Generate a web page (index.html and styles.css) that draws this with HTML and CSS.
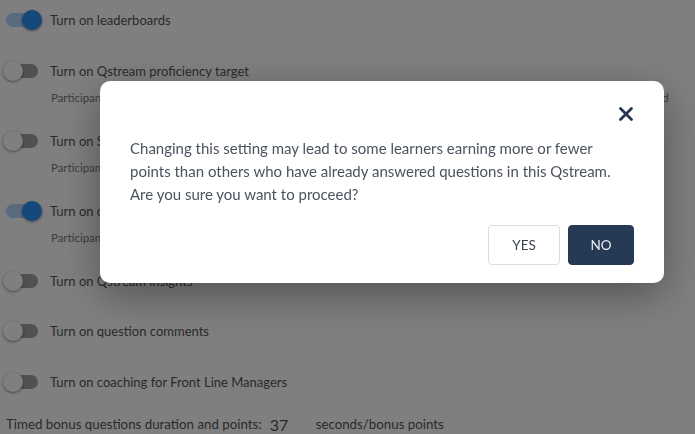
FILE: index.html
```html
<!DOCTYPE html>
<html lang="en">
<head>
<meta charset="utf-8">
<title>Settings</title>
<link rel="stylesheet" href="styles.css">
</head>
<body>
<main class="page">
  <ul class="settings">
    <li class="setting">
      <div class="setting-line"><span class="switch is-on"><span class="knob"></span></span><span class="label">Turn on leaderboards</span></div>
    </li>
    <li class="setting">
      <div class="setting-line"><span class="switch"><span class="knob"></span></span><span class="label">Turn on Qstream proficiency target</span></div>
      <p class="hint">Participants who reach the proficiency target for each topic in this Qstream will be shown as proficient and their score noted</p>
    </li>
    <li class="setting">
      <div class="setting-line"><span class="switch"><span class="knob"></span></span><span class="label">Turn on Spaced Education</span></div>
      <p class="hint">Participants receive questions again until they are answered correctly</p>
    </li>
    <li class="setting">
      <div class="setting-line"><span class="switch is-on"><span class="knob"></span></span><span class="label">Turn on confidence scoring</span></div>
      <p class="hint">Participants rate their confidence before answering</p>
    </li>
    <li class="setting">
      <div class="setting-line"><span class="switch"><span class="knob"></span></span><span class="label">Turn on Qstream insights</span></div>
    </li>
    <li class="setting">
      <div class="setting-line"><span class="switch"><span class="knob"></span></span><span class="label">Turn on question comments</span></div>
    </li>
    <li class="setting">
      <div class="setting-line"><span class="switch"><span class="knob"></span></span><span class="label">Turn on coaching for Front Line Managers</span></div>
    </li>
  </ul>
  <div class="bonus">
    <span class="bonus-label">Timed bonus questions duration and points:</span>
    <span class="bonus-value">37</span>
    <span class="bonus-unit">seconds/bonus points</span>
  </div>
</main>

<div class="backdrop">
  <div class="dialog" role="dialog" aria-modal="true">
    <div class="dialog-head">
      <button class="close" aria-label="Close">
        <svg width="18" height="18" viewBox="0 0 18 18" aria-hidden="true"><path d="M3.5 3.5 L14.5 14.5 M14.5 3.5 L3.5 14.5" stroke="#25354f" stroke-width="2.8" stroke-linecap="round" fill="none"/></svg>
      </button>
    </div>
    <p class="dialog-text">Changing this setting may lead to some learners earning more or fewer points than others who have already answered questions in this Qstream. Are you sure you want to proceed?</p>
    <div class="dialog-actions">
      <button class="btn btn-yes">YES</button>
      <button class="btn btn-no">NO</button>
    </div>
  </div>
</div>
</body>
</html>
```

FILE: styles.css
```css
* { box-sizing: border-box; }

html, body {
  margin: 0;
  padding: 0;
  background: #ffffff;
  width: 695px;
  height: 434px;
  overflow: hidden;
}

body {
  font-family: "Lato", "Open Sans", "Liberation Sans", sans-serif;
  color: #555555;
}

.page {
  padding: 5px 0 0 3px;
}

.settings {
  list-style: none;
  margin: 0;
  padding: 0;
  display: flex;
  flex-direction: column;
  gap: 20px;
}

.setting-line {
  display: flex;
  align-items: center;
  height: 30.5px;
}

.switch {
  position: relative;
  width: 40px;
  height: 20px;
  flex: 0 0 40px;
}

.switch::before {
  content: "";
  position: absolute;
  left: 3px;
  top: 3px;
  width: 32px;
  height: 14px;
  border-radius: 7px;
  background: #a2a2a2;
}

.knob {
  position: absolute;
  left: 0;
  top: 0;
  width: 20px;
  height: 20px;
  border-radius: 50%;
  background: #ffffff;
  box-shadow: 0 1px 3px rgba(0, 0, 0, 0.45);
}

.switch.is-on::before { background: #b0d6ff; }
.switch.is-on .knob { left: 19px; background: #2a92f6; }

.label {
  margin-left: 7px;
  font-size: 13px;
  white-space: nowrap;
}

.hint {
  margin: 2.5px 0 0 48px;
  line-height: 17px;
  height: 17px;
  font-size: 11.4px;
  color: #7a7a7a;
  white-space: nowrap;
}

.bonus {
  margin-top: 17px;
  margin-left: 3px;
  display: flex;
  align-items: center;
  height: 20px;
  font-size: 13.3px;
  white-space: nowrap;
}

.bonus-value {
  font-size: 16px;
  margin-left: 8px;
  width: 46px;
}

.backdrop {
  position: fixed;
  inset: 0;
  background: rgba(0, 0, 0, 0.5);
}

.dialog {
  position: absolute;
  left: 100px;
  top: 81px;
  width: 564px;
  height: 202px;
  background: #ffffff;
  border-radius: 10px;
  padding: 24px 30px 18px 30px;
  box-shadow: 0 12px 40px rgba(0, 0, 0, 0.35);
}

.dialog-head {
  display: flex;
  justify-content: flex-end;
  height: 18px;
  margin-right: -1px;
}

.close {
  border: 0;
  background: none;
  padding: 0;
  width: 18px;
  height: 18px;
  cursor: pointer;
}

.close svg { display: block; }

.dialog-text {
  margin: 14px 0 0 0;
  font-size: 15px;
  line-height: 23px;
  color: #4b5360;
}

.dialog-actions {
  margin-top: 19px;
  display: flex;
  justify-content: flex-end;
  gap: 8px;
}

.btn {
  height: 40px;
  border-radius: 4px;
  font-family: inherit;
  font-size: 13.5px;
  cursor: pointer;
}

.btn-yes {
  width: 72px;
  background: #ffffff;
  border: 1px solid #dcdcdc;
  color: #3b4350;
}

.btn-no {
  width: 66px;
  background: #263a55;
  border: 1px solid #263a55;
  color: #e8ecf2;
}
```
